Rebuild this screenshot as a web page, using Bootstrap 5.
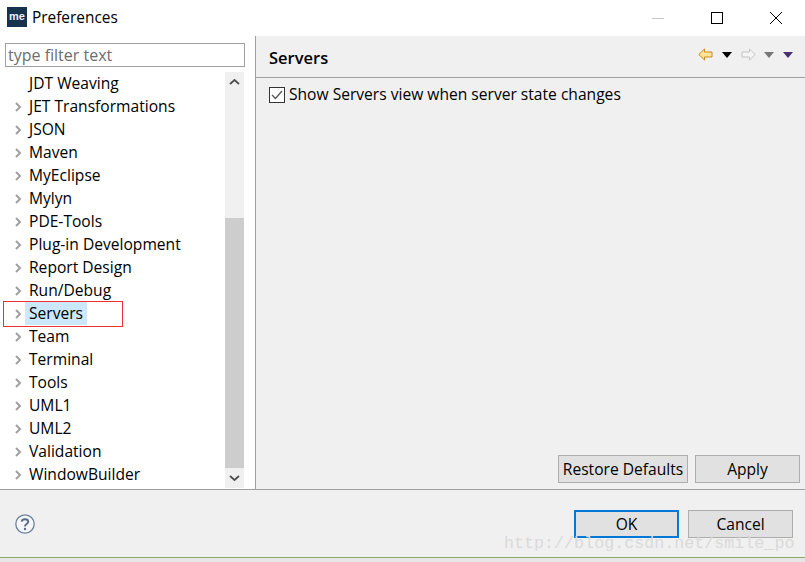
<!DOCTYPE html>
<html lang="en">
<head>
<meta charset="utf-8">
<title>Preferences</title>
<link rel="stylesheet" href="https://cdn.jsdelivr.net/npm/bootstrap@5.3.0/dist/css/bootstrap.min.css">
<style>
html,body{margin:0;height:562px;overflow:hidden;background:#fff}
body{font-family:"Open Sans","Noto Sans",sans-serif;font-size:15.6px;color:#000;position:relative}
.win-title{height:36px;background:#fff}
.app-logo{width:20px;height:20px;background:#17324f;color:#e8eef4;font:700 11px/19px "Liberation Sans",sans-serif;text-align:center;margin-left:7px;margin-top:-2px}
.title-text{margin-left:5px;font-size:15.4px;margin-top:-1px}
.win-btn{width:59px;height:36px}
.win-main{height:454px;border-bottom:1px solid #a0a0a0}
.left-pane{width:256px;background:#fff;border-right:1px solid #a0a0a0;padding-top:7px}
.filter-box{margin:0 10px 0 5px;width:240px;height:24px;border:1px solid #a0a0a0;padding:0 2px;font-size:16px;line-height:23px;color:#6d6d6d}
.tree-wrap{margin-top:5px;height:416px;padding-right:11px}
.tree-col{width:225px;min-width:225px}
.tree-row{height:23px;display:flex;align-items:center;white-space:nowrap}
.twisty{width:11px;margin-left:14px;flex:none;height:23px;display:flex;align-items:center}
.tree-label{padding:0 4px;height:23px;line-height:23px;margin-top:-1px}
.tree-sel{background:#cce8ff}
.scroll-track{width:19px;background:#f0f0f0}
.scroll-arrow{height:20px}
.scroll-gap{height:126px}
.scroll-thumb{height:250px;background:#cdcdcd}
.scroll-fill{height:0;flex:1}
.right-pane{background:#f0f0f0;min-width:0}
.page-head{height:42px;border-bottom:1px solid #a0a0a0;padding-left:13px;padding-right:12px}
.page-title{font-weight:600;font-size:16.5px;margin-top:4px}
.nav-tools{width:95px;margin-top:-4px}
.page-body{padding:5px 0 0 13px}
.chk{width:16px;height:16px;border:1px solid #333;background:#fff;margin-right:4px;flex:none}
.action-row{padding:0 5px 6px 0;gap:7px}
.dlg-btn{background:#e1e1e1;border:1px solid #adadad;height:28px;font-size:15.6px;line-height:25px;text-align:center;padding:0;color:#000;border-radius:0}
.w-restore{width:130px}.w-apply{width:105px}.w-ok{width:105px;border:2px solid #0078d7;line-height:24px}.w-cancel{width:105px}
.win-foot{height:68px;background:#f0f0f0;border-bottom:1px solid #8ba866;padding:0 12px 0 15px}
.foot-gap{gap:9px;margin-top:1px}
.win-rest{height:4px;background:#e6e6e6}
.red-mark{position:absolute;left:3px;top:301px;width:120px;height:26px;border:1px solid #ee3030}
.wmark{position:absolute;left:504px;top:534px;font-family:"Liberation Mono",monospace;font-size:16.7px;line-height:20px;color:#dadada;white-space:nowrap}
</style>
</head>
<body>
<div class="win-title d-flex align-items-center">
  <div class="app-logo">me</div>
  <div class="title-text flex-grow-1">Preferences</div>
  <div class="win-btn d-flex align-items-center justify-content-center"><svg width="14" height="14" viewBox="0 0 14 14"><path d="M1 7.500h12" stroke="#c8c8c8" fill="none"/></svg></div>
  <div class="win-btn d-flex align-items-center justify-content-center"><svg width="14" height="14" viewBox="0 0 14 14"><rect x="1.500" y="1.500" width="11" height="11" stroke="#000" fill="none"/></svg></div>
  <div class="win-btn d-flex align-items-center justify-content-center"><svg width="14" height="14" viewBox="0 0 14 14"><path d="M1 1l12 12M13 1L1 13" stroke="#000" fill="none"/></svg></div>
</div>
<div class="win-main d-flex">
  <div class="left-pane flex-none">
    <div class="filter-box">type filter text</div>
    <div class="tree-wrap d-flex">
      <div class="tree-col" id="tree">
        <div class="tree-row"><span class="twisty"></span><span class="tree-label">JDT Weaving</span></div>
        <div class="tree-row"><span class="twisty"><svg width="8" height="10" viewBox="0 0 8 10"><path d="M2 1l4 4-4 4" stroke="#a0a0a0" stroke-width="2" fill="none"/></svg></span><span class="tree-label">JET Transformations</span></div>
        <div class="tree-row"><span class="twisty"><svg width="8" height="10" viewBox="0 0 8 10"><path d="M2 1l4 4-4 4" stroke="#a0a0a0" stroke-width="2" fill="none"/></svg></span><span class="tree-label">JSON</span></div>
        <div class="tree-row"><span class="twisty"><svg width="8" height="10" viewBox="0 0 8 10"><path d="M2 1l4 4-4 4" stroke="#a0a0a0" stroke-width="2" fill="none"/></svg></span><span class="tree-label">Maven</span></div>
        <div class="tree-row"><span class="twisty"><svg width="8" height="10" viewBox="0 0 8 10"><path d="M2 1l4 4-4 4" stroke="#a0a0a0" stroke-width="2" fill="none"/></svg></span><span class="tree-label">MyEclipse</span></div>
        <div class="tree-row"><span class="twisty"><svg width="8" height="10" viewBox="0 0 8 10"><path d="M2 1l4 4-4 4" stroke="#a0a0a0" stroke-width="2" fill="none"/></svg></span><span class="tree-label">Mylyn</span></div>
        <div class="tree-row"><span class="twisty"><svg width="8" height="10" viewBox="0 0 8 10"><path d="M2 1l4 4-4 4" stroke="#a0a0a0" stroke-width="2" fill="none"/></svg></span><span class="tree-label">PDE-Tools</span></div>
        <div class="tree-row"><span class="twisty"><svg width="8" height="10" viewBox="0 0 8 10"><path d="M2 1l4 4-4 4" stroke="#a0a0a0" stroke-width="2" fill="none"/></svg></span><span class="tree-label">Plug-in Development</span></div>
        <div class="tree-row"><span class="twisty"><svg width="8" height="10" viewBox="0 0 8 10"><path d="M2 1l4 4-4 4" stroke="#a0a0a0" stroke-width="2" fill="none"/></svg></span><span class="tree-label">Report Design</span></div>
        <div class="tree-row"><span class="twisty"><svg width="8" height="10" viewBox="0 0 8 10"><path d="M2 1l4 4-4 4" stroke="#a0a0a0" stroke-width="2" fill="none"/></svg></span><span class="tree-label">Run/Debug</span></div>
        <div class="tree-row"><span class="twisty"><svg width="8" height="10" viewBox="0 0 8 10"><path d="M2 1l4 4-4 4" stroke="#a0a0a0" stroke-width="2" fill="none"/></svg></span><span class="tree-label tree-sel">Servers</span></div>
        <div class="tree-row"><span class="twisty"><svg width="8" height="10" viewBox="0 0 8 10"><path d="M2 1l4 4-4 4" stroke="#a0a0a0" stroke-width="2" fill="none"/></svg></span><span class="tree-label">Team</span></div>
        <div class="tree-row"><span class="twisty"><svg width="8" height="10" viewBox="0 0 8 10"><path d="M2 1l4 4-4 4" stroke="#a0a0a0" stroke-width="2" fill="none"/></svg></span><span class="tree-label">Terminal</span></div>
        <div class="tree-row"><span class="twisty"><svg width="8" height="10" viewBox="0 0 8 10"><path d="M2 1l4 4-4 4" stroke="#a0a0a0" stroke-width="2" fill="none"/></svg></span><span class="tree-label">Tools</span></div>
        <div class="tree-row"><span class="twisty"><svg width="8" height="10" viewBox="0 0 8 10"><path d="M2 1l4 4-4 4" stroke="#a0a0a0" stroke-width="2" fill="none"/></svg></span><span class="tree-label">UML1</span></div>
        <div class="tree-row"><span class="twisty"><svg width="8" height="10" viewBox="0 0 8 10"><path d="M2 1l4 4-4 4" stroke="#a0a0a0" stroke-width="2" fill="none"/></svg></span><span class="tree-label">UML2</span></div>
        <div class="tree-row"><span class="twisty"><svg width="8" height="10" viewBox="0 0 8 10"><path d="M2 1l4 4-4 4" stroke="#a0a0a0" stroke-width="2" fill="none"/></svg></span><span class="tree-label">Validation</span></div>
        <div class="tree-row"><span class="twisty"><svg width="8" height="10" viewBox="0 0 8 10"><path d="M2 1l4 4-4 4" stroke="#a0a0a0" stroke-width="2" fill="none"/></svg></span><span class="tree-label">WindowBuilder</span></div>
      </div>
      <div class="scroll-track d-flex flex-column">
        <div class="scroll-arrow d-flex align-items-center justify-content-center"><svg width="11" height="8" viewBox="0 0 11 8"><path d="M1 6l4.500-4 4.500 4" stroke="#505050" stroke-width="1.800" fill="none"/></svg></div>
        <div class="scroll-gap"></div>
        <div class="scroll-thumb"></div>
        <div class="scroll-fill"></div>
        <div class="scroll-arrow d-flex align-items-center justify-content-center"><svg width="11" height="8" viewBox="0 0 11 8"><path d="M1 2l4.500 4 4.500-4" stroke="#505050" stroke-width="1.800" fill="none"/></svg></div>
      </div>
    </div>
  </div>
  <div class="right-pane flex-grow-1 d-flex flex-column">
    <div class="page-head d-flex align-items-center justify-content-between">
      <div class="page-title">Servers</div>
      <div class="nav-tools d-flex align-items-center justify-content-between">
        <svg width="15" height="13" viewBox="0 0 15 13"><path d="M.8 6.500L6.500 1v3h7.500v5H6.500v3z" fill="#ffe39a" stroke="#c98a16"/></svg>
        <svg width="10" height="6" viewBox="0 0 10 6"><path d="M0 0h10L5 6z" fill="#000"/></svg>
        <svg width="15" height="13" viewBox="0 0 15 13"><path d="M14.200 6.500L8.500 1v3H1v5h7.500v3z" fill="#f4f4f4" stroke="#c4c4c4"/></svg>
        <svg width="10" height="6" viewBox="0 0 10 6"><path d="M0 0h10L5 6z" fill="#777"/></svg>
        <svg width="10" height="6" viewBox="0 0 10 6"><path d="M0 0h10L5 6z" fill="#46306e"/></svg>
      </div>
    </div>
    <div class="page-body d-flex align-items-center">
      <span class="chk d-flex align-items-center justify-content-center"><svg width="12" height="10" viewBox="0 0 12 10"><path d="M1 5l3.500 3.500L11 1" stroke="#555" stroke-width="1.300" fill="none"/></svg></span>
      <span>Show Servers view when server state changes</span>
    </div>
    <div class="action-row d-flex justify-content-end mt-auto">
      <button class="dlg-btn w-restore" type="button">Restore Defaults</button>
      <button class="dlg-btn w-apply" type="button">Apply</button>
    </div>
  </div>
</div>
<div class="win-foot d-flex align-items-center justify-content-between">
  <svg width="20" height="20" viewBox="0 0 20 20"><circle cx="10" cy="10" r="9.200" fill="#f4f6f9" stroke="#6f7f9a" stroke-width="1.300"/><path d="M6.800 7.600C7 4.600 13.200 4.400 13.200 7.800c0 2.200-3.200 2.200-3.200 4.600" fill="none" stroke="#5a6a86" stroke-width="1.900"/><circle cx="10" cy="15" r="1.200" fill="#5a6a86"/></svg>
  <div class="d-flex foot-gap">
    <button class="dlg-btn w-ok" type="button">OK</button>
    <button class="dlg-btn w-cancel" type="button">Cancel</button>
  </div>
</div>
<div class="win-rest"></div>
<div class="red-mark"></div>
<div class="wmark">http://blog.csdn.net/smile_po</div>
</body>
</html>
